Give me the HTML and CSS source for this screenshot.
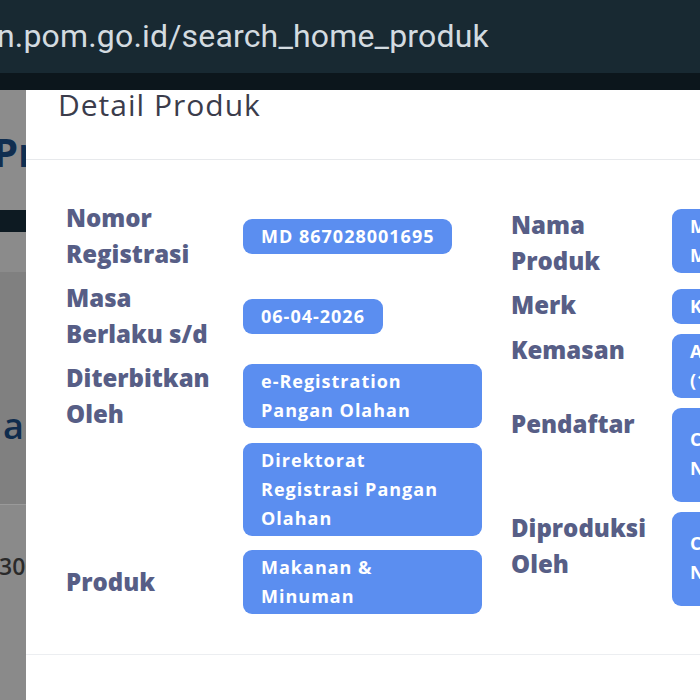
FILE: index.html
```html
<!DOCTYPE html>
<html lang="id">
<head>
<meta charset="utf-8">
<title>Detail Produk</title>
<link rel="stylesheet" href="styles.css">
</head>
<body>
<div class="screen">
  <div class="urlbar"><span class="url">n.pom.go.id/search_home_produk</span></div>
  <div class="tabstrip"></div>
  <div class="main">
    <div class="backdrop">
      <div class="bg-hero"><span class="hero-text">Produk</span></div>
      <div class="bg-bar"></div>
      <div class="bg-light"></div>
      <div class="bg-dark"><span class="bg-a">a</span></div>
      <div class="bg-row"><span class="bg-num">3000</span></div>
    </div>
    <div class="modal">
      <div class="modal-header"><h5 class="modal-title">Detail Produk</h5></div>
      <div class="modal-body">
        <div class="info-table info-left">
          <div class="label">Nomor Registrasi</div>
          <div class="value"><span class="badge">MD 867028001695</span></div>

          <div class="label">Masa Berlaku s/d</div>
          <div class="value"><span class="badge">06-04-2026</span></div>

          <div class="label">Diterbitkan Oleh</div>
          <div class="value"><span class="badge">e-Registration Pangan Olahan</span></div>

          <div class="label"></div>
          <div class="value"><span class="badge">Direktorat Registrasi Pangan Olahan</span></div>

          <div class="label">Produk</div>
          <div class="value"><span class="badge">Makanan &amp; Minuman</span></div>
        </div>
        <div class="info-table info-right">
          <div class="label">Nama Produk</div>
          <div class="value"><span class="badge block">Mie Instan<br>Mie Goreng</span></div>

          <div class="label">Merk</div>
          <div class="value"><span class="badge block">Kusuka</span></div>

          <div class="label">Kemasan</div>
          <div class="value"><span class="badge block">Aluminium Foil<br>(100 g)</span></div>

          <div class="label">Pendaftar</div>
          <div class="value"><span class="badge block tall">CV. Sumber<br>Nusantara</span></div>

          <div class="label">Diproduksi Oleh</div>
          <div class="value"><span class="badge block tall">CV. Sumber<br>Nusantara</span></div>
        </div>
      </div>
      <div class="modal-footer"></div>
    </div>
  </div>
</div>
</body>
</html>
```

FILE: styles.css
```css
html, body {
  margin: 0;
  padding: 0;
  background: #ffffff;
  overflow: hidden;
}

body {
  font-family: "Open Sans", "Liberation Sans", sans-serif;
}

.screen {
  width: 700px;
  height: 700px;
  overflow: hidden;
  display: flex;
  flex-direction: column;
}

/* browser url bar */
.urlbar {
  flex: none;
  height: 73px;
  background: #182932;
  overflow: hidden;
}

.url {
  display: block;
  margin-left: -3px;
  font-family: Roboto, "Noto Sans", sans-serif;
  font-weight: 400;
  font-size: 32px;
  line-height: 73px;
  letter-spacing: 0.17px;
  color: #d3dbe0;
  white-space: nowrap;
}

.tabstrip {
  flex: none;
  height: 17px;
  background: #0c161c;
}

.main {
  flex: 1;
  min-height: 0;
  display: flex;
}

/* dimmed page under the modal */
.backdrop {
  flex: none;
  width: 26px;
  overflow: hidden;
  display: flex;
  flex-direction: column;
  background: #8a8a8a;
}

.bg-hero {
  flex: none;
  height: 120px;
  padding-top: 42px;
  box-sizing: border-box;
  background: #8c8c8c;
}

.hero-text {
  display: block;
  margin-left: -7px;
  font-weight: 700;
  font-size: 40px;
  line-height: 40px;
  color: #102e50;
  white-space: nowrap;
}

.bg-bar {
  flex: none;
  height: 22px;
  background: #0d1a22;
}

.bg-light {
  flex: none;
  height: 40px;
  background: #8b8b8b;
}

.bg-dark {
  flex: none;
  height: 233px;
  box-sizing: border-box;
  padding-top: 136px;
  background: #808080;
  border-bottom: 1px solid #9a9a9a;
}

.bg-a {
  display: block;
  margin-left: 3px;
  font-weight: 600;
  font-size: 36px;
  line-height: 36px;
  color: #0f2c4d;
}

.bg-row {
  flex: 1;
  padding-top: 50px;
  background: #8a8a8a;
}

.bg-num {
  display: block;
  margin-left: -1px;
  font-weight: 600;
  font-size: 23px;
  line-height: 23px;
  color: #2a2a2a;
  white-space: nowrap;
}

/* modal */
.modal {
  flex: none;
  width: 900px;
  background: #ffffff;
  display: flex;
  flex-direction: column;
}

.modal-header {
  flex: none;
  height: 70px;
  box-sizing: border-box;
  padding-left: 32px;
  border-bottom: 1px solid #e7e9ec;
}

.modal-title {
  margin: 0;
  font-weight: 400;
  font-size: 30px;
  line-height: 30px;
  letter-spacing: 1px;
  color: #3b3c4b;
}

.modal-body {
  flex: none;
  display: flex;
  align-items: flex-start;
  gap: 29px;
  padding: 40px 0 37px 40px;
}

.info-table {
  display: grid;
}

.info-left {
  grid-template-columns: 177px 239px;
  row-gap: 8px;
  align-items: center;
}

.info-right {
  grid-template-columns: 161px 240px;
  row-gap: 8px;
  align-items: start;
  padding-top: 7px;
}

.label {
  padding-right: 30px;
  font-weight: 800;
  font-size: 24px;
  line-height: 36px;
  color: #575e86;
}

.info-right .label {
  padding-right: 10px;
}

.badge {
  display: inline-block;
  max-width: 100%;
  box-sizing: border-box;
  margin: 3px 0;
  padding: 3px 18px;
  border-radius: 9px;
  background: #5b8ef0;
  color: #ffffff;
  font-weight: 700;
  font-size: 18px;
  line-height: 29px;
  letter-spacing: 1px;
}

.info-right .badge {
  margin: 2px 0 0;
}

.badge.block {
  display: block;
}

.badge.tall {
  padding: 17px 18px 19px;
}

.modal-footer {
  flex: 1;
  border-top: 1px solid #eceef1;
}
```
